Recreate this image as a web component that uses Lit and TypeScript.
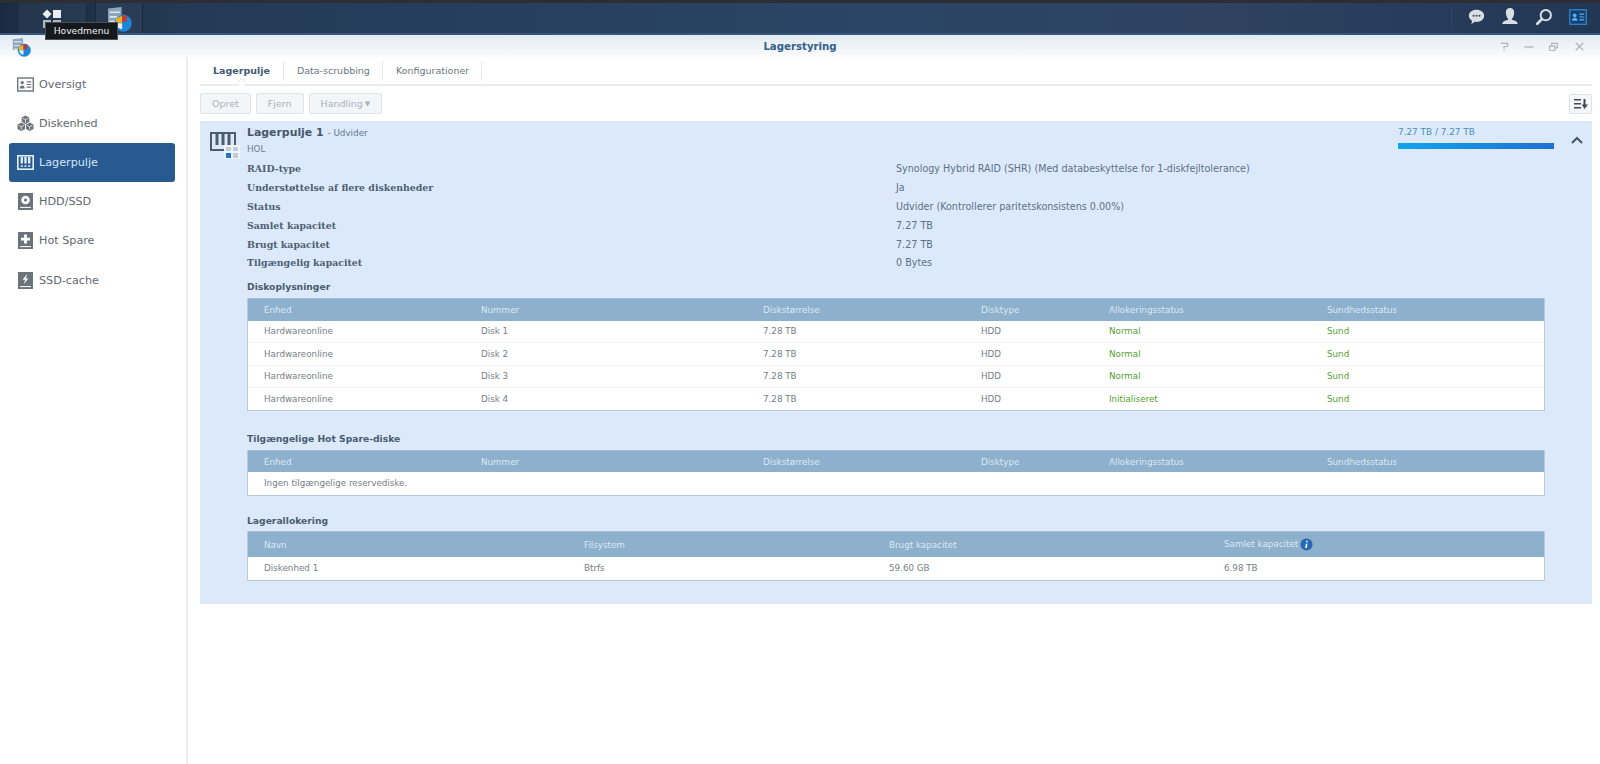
import { LitElement, html, css, svg } from 'lit';
import { customElement, state } from 'lit/decorators.js';

// sidebar icons, all in a 17x17 box
const navIcons: Record<string, unknown> = {
  overview: svg`<rect x="0.7" y="2" width="15.6" height="13" fill="none" stroke="currentColor" stroke-width="1.4"/><circle cx="5.2" cy="6.600" r="1.700" fill="currentColor"/><path d="M2.600 12.400c.2-2 1.100-2.900 2.600-2.900s2.400.9 2.600 2.900z" fill="currentColor"/><path d="M9.600 5.800h4.600M9.600 8.500h4.600M9.600 11.200h4.600" stroke="currentColor" stroke-width="1.200"/>`,
  volume: svg`<path d="M8.500 .5l3.800 2.100v4.200L8.500 8.900 4.700 6.800V2.600zM4.300 7.500l3.700 2.100v4.300l-3.700 2.200L.5 13.900V9.600zM12.700 7.500l3.800 2.100v4.300l-3.800 2.200L9 13.900V9.600z" fill="currentColor"/><path d="M8.500 4.700v3M5.500 3.200l3 1.500 3-1.500M4.300 11.700v3M1.500 10.200l2.800 1.500 2.800-1.500M12.700 11.700v3M9.900 10.200l2.800 1.500 2.800-1.500" fill="none" stroke="#fff" stroke-width=".7"/>`,
  pool: svg`<rect x="0.800" y="1.800" width="15.400" height="13.400" fill="none" stroke="currentColor" stroke-width="1.600"/><path d="M4.800 3v6.600M8.500 3v6.600M12.200 3v6.600" stroke="currentColor" stroke-width="2.400"/><path d="M4.800 11.200v1.600M8.500 11.200v1.600M12.200 11.200v1.600" stroke="currentColor" stroke-width="2.200"/>`,
  hdd: svg`<path d="M1 0h15v17H1z" fill="currentColor"/><circle cx="8.500" cy="7" r="4.300" fill="#fff"/><circle cx="8.500" cy="7" r="1.600" fill="currentColor"/><path d="M3 14.400h11" stroke="#fff" stroke-width="1"/>`,
  spare: svg`<path d="M1 0h15v17H1z" fill="currentColor"/><path d="M8.500 2.600v9M4 7.100h9" stroke="#fff" stroke-width="2.800"/><path d="M3 14.600h11" stroke="#fff" stroke-width="1"/>`,
  cache: svg`<path d="M1 0h15v17H1z" fill="currentColor"/><path d="M10.400 1.800L5.600 7.800h2.600L6.800 12l4.600-5.400H8.800z" fill="#fff"/><path d="M3 14.600h11" stroke="#fff" stroke-width="1"/>`,
};

const storageLogo = (size: number) => html`<svg width=${size} height=${size} viewBox="0 0 24 24">
  <path d="M1 1.500l13-1.500v15H1z" fill="#8fa6bd"/>
  <path d="M2.500 5h10M2.500 9.500h10M2.500 14h6" stroke="#dde6ee" stroke-width="1.500"/>
  <circle cx="15.500" cy="15.500" r="8.200" fill="#1c86d8"/>
  <path d="M8.500 11l6-2.500v6.500h-6z" fill="#f0b020"/>
  <path d="M14.500 8h4.500v6h-4.500z" fill="#c9342c"/>
  <path d="M9 15.500h5.500V21c-3 0-5.500-2-5.500-5.500z" fill="#ececec"/>
</svg>`;

@customElement('app-root')
export class AppRoot extends LitElement {
  @state() private selected = 'Lagerpulje';

  static styles = css`
    :host {
      display: block;
      width: 1600px;
      height: 764px;
      overflow: hidden;
      background: #fff;
      font-family: 'DejaVu Sans', Verdana, sans-serif;
      font-size: 9.5px;
      color: #5f6a74;
      position: relative;
    }

    .taskbar {
      height: 35px;
      box-sizing: border-box;
      display: flex;
      align-items: stretch;
      padding-left: 17px;
      background: linear-gradient(90deg, #1b2c42 0%, #243a56 12%, #2a4566 55%, #2f4361 75%, #213754 100%);
      border-top: 3px solid #2d2e34;
      border-bottom: 2px solid #38557f;
    }
    .task {
      width: 70px;
      display: flex;
      justify-content: center;
      background: rgba(255, 255, 255, 0.04);
      border-left: 1px solid #18273b;
      border-right: 1px solid #18273b;
      margin-right: 8px;
      box-sizing: border-box;
    }
    .task svg { margin-top: 6px; }
    .task + .task { width: 48px; justify-content: flex-start; }
    .task + .task svg { margin: 4px 0 0 11px; overflow: visible; }
    .tray {
      margin-left: auto;
      display: flex;
      align-items: center;
      gap: 16px;
      padding: 0 13px 3px 0;
    }
    .tray .rule { width: 1px; height: 22px; background: #2f4a68; }
    .tray svg { display: block; color: #d9dee3; }

    .tooltip {
      position: absolute;
      left: 45px;
      top: 22px;
      height: 18px;
      box-sizing: border-box;
      width: 73px;
      text-align: center;
      line-height: 16px;
      background: #15181c;
      border: 1px solid #4a4f55;
      color: #eef0f2;
      font-size: 9.2px;
      white-space: nowrap;
    }

    .titlebar {
      height: 22px;
      display: grid;
      grid-template-columns: 1fr auto 1fr;
      align-items: center;
      padding: 0 16px;
      background: linear-gradient(#e2ebf3, #fafbfd);
    }
    .titlebar > svg { margin: 3px 0 0 -4px; }
    .titlebar h1 {
      margin: 0;
      text-align: center;
      font-size: 10.2px;
      font-weight: bold;
      color: #34608a;
    }
    .winctl { display: flex; gap: 15px; color: #b0b6bd; justify-content: flex-end; }
    .winctl svg { display: block; }
    .winctl svg:last-child { margin-left: 2px; }

    .body {
      display: flex;
      height: 707px;
    }
    .sidebar {
      width: 188px;
      flex: none;
      border-right: 2px solid #eceef0;
      padding-top: 7.6px;
      box-sizing: border-box;
    }
    .nav {
      height: 39.2px;
      margin: 0 11px 0 9px;
      display: flex;
      align-items: center;
      gap: 5px;
      padding-left: 8px;
      font-size: 11.2px;
      color: #5f6870;
      border-radius: 3px;
      cursor: pointer;
    }
    .nav svg { flex: none; color: #6c747b; }
    .nav.on { background: #265a90; color: #d5e6f8; }
    .nav.on svg { color: #e4eef8; }

    .main {
      flex: 1;
      min-width: 0;
      padding: 0 8px 0 12px;
      box-sizing: border-box;
    }
    .tabs {
      display: flex;
      align-items: center;
      border-bottom: 2px solid #e9ebee;
      box-sizing: border-box;
      height: 29px;
    }
    .tab {
      padding: 0 13px;
      height: 20px;
      line-height: 20px;
      border-right: 1px solid #e5e8ec;
      color: #6c7781;
      position: relative;
    }
    .tab + .tab { padding-right: 12px; }
    .tab.on { font-weight: bold; color: #3e5a75; }
    .tab.on::after {
      content: '';
      position: absolute;
      left: 50%;
      bottom: -5px;
      width: 6px;
      height: 6px;
      margin-left: -3px;
      background: #fff;
      border-top: 1px solid #e9ebee;
      border-left: 1px solid #e9ebee;
      transform: rotate(45deg);
    }
    .toolbar {
      display: flex;
      align-items: center;
      gap: 5px;
      height: 35px;
    }
    .btn {
      height: 21px;
      line-height: 20px;
      padding: 0 11px;
      box-sizing: border-box;
      border: 1px solid #dfe4ea;
      border-radius: 2px;
      background: #f3f6f9;
      color: #a9b1ba;
    }
    .caret { font-size: 7px; vertical-align: 1px; margin-left: 2px; }
    .sort {
      margin-left: auto;
      width: 23px;
      height: 20px;
      padding: 0;
      display: flex;
      align-items: center;
      justify-content: center;
      background: #f6f7f9;
      color: #3e4a55;
    }

    .panel {
      height: 483px;
      box-sizing: border-box;
      background: #dce9fa;
      padding: 5px 47px 0 47px;
      position: relative;
    }
    .pool-icon {
      position: absolute;
      left: 10px;
      top: 9px;
    }
    .head-name { font-size: 10.9px; font-weight: bold; color: #46586b; line-height: 14px; }
    .head-state { font-size: 8.8px; font-weight: normal; color: #5d7a94; }
    .hol { font-size: 8.8px; color: #6d7f90; margin-top: 4px; line-height: 11px; }
    .usage {
      position: absolute;
      right: 38px;
      top: 6px;
      width: 156px;
      color: #4b8fc0;
      font-size: 8.9px;
      line-height: 11px;
    }
    .bar {
      height: 6px;
      margin-top: 5px;
      background: linear-gradient(90deg, #12a3ee, #2071cf);
    }
    .chevron { position: absolute; right: 9px; top: 15px; color: #41566b; }

    .facts {
      display: grid;
      grid-template-columns: 649px 1fr;
      grid-auto-rows: 18.8px;
      align-items: center;
      margin-top: 4.6px;
      color: #5c7186;
      font-size: 9.6px;
    }
    .facts b { color: #4d5f72; font-family: 'DejaVu Serif', Georgia, serif; font-size: 9.4px; }

    h3 {
      margin: 9px 0 5px;
      font-size: 9.2px;
      font-weight: bold;
      color: #495c70;
      line-height: 12px;
    }
    h3.second { margin-top: 21.5px; }
    h3.third { margin: 19.5px 0 4px; }
    .table {
      background: #fff;
      border: 1px solid #b9c9d9;
      border-top: none;
      width: 1298px;
      box-sizing: border-box;
      font-size: 8.75px;
    }
    .row {
      display: grid;
      grid-template-columns: var(--cols);
      padding-left: 16px;
      height: 22.4px;
      box-sizing: border-box;
      align-items: center;
      border-bottom: 1px solid #f3f5f7;
      color: #767e85;
    }
    .row:last-child { border-bottom: none; }
    .row.hd {
      background: #8db0cd;
      color: #dde8f1;
      border-top: 1px solid #a3bdd4;
      border-bottom: none;
    }
    .row.tall { height: 26px; }
    .ok { color: #55a032; }
    .info { display: inline-flex; vertical-align: middle; margin-left: 2px; }
  `;

  private nav = [
    ['Oversigt', 'overview'],
    ['Diskenhed', 'volume'],
    ['Lagerpulje', 'pool'],
    ['HDD/SSD', 'hdd'],
    ['Hot Spare', 'spare'],
    ['SSD-cache', 'cache'],
  ];

  private facts = [
    ['RAID-type', 'Synology Hybrid RAID (SHR) (Med databeskyttelse for 1-diskfejltolerance)'],
    ['Understøttelse af flere diskenheder', 'Ja'],
    ['Status', 'Udvider (Kontrollerer paritetskonsistens 0.00%)'],
    ['Samlet kapacitet', '7.27 TB'],
    ['Brugt kapacitet', '7.27 TB'],
    ['Tilgængelig kapacitet', '0 Bytes'],
  ];

  private diskCols = ['Enhed', 'Nummer', 'Diskstørrelse', 'Disktype', 'Allokeringsstatus', 'Sundhedsstatus'];

  private disks = [
    ['Disk 1', 'Normal'],
    ['Disk 2', 'Normal'],
    ['Disk 3', 'Normal'],
    ['Disk 4', 'Initialiseret'],
  ];

  private renderTaskbar() {
    return html`
      <div class="taskbar">
        <div class="task">
          <svg width="20" height="20" viewBox="0 0 20 20" fill="#e9edf1">
            <path d="M5 .5L9.500 5 5 9.500.5 5z"/>
            <rect x="11" y="1" width="8" height="8"/>
            <rect x="1" y="11" width="8" height="8" opacity=".7"/>
            <rect x="11" y="11" width="8" height="8" opacity=".7"/>
          </svg>
        </div>
        <div class="task">${storageLogo(25)}</div>
        <div class="tray">
          <div class="rule"></div>
          <svg width="17" height="17" viewBox="0 0 20 20" fill="currentColor"><path d="M10 2c5 0 9 3 9 7.200s-4 7.200-9 7.200c-.8 0-1.500-.1-2.200-.2L4 19l.7-4C2.500 13.700 1 11.600 1 9.200 1 5 5 2 10 2z"/><circle cx="6.500" cy="9.200" r="1.200" fill="#33475f"/><circle cx="10" cy="9.200" r="1.200" fill="#33475f"/><circle cx="13.500" cy="9.200" r="1.200" fill="#33475f"/></svg>
          <svg width="18" height="19" viewBox="0 0 18 20" fill="currentColor"><path d="M9 1c2.800 0 4.400 2 4.400 5s-1.400 5.500-2.400 6.300v1.200c2.500.7 6 1.500 6 4.500H1c0-3 3.500-3.800 6-4.500v-1.200C6 11.500 4.600 9 4.600 6S6.200 1 9 1z"/></svg>
          <svg width="18" height="18" viewBox="0 0 19 20" fill="none" stroke="currentColor"><circle cx="11.500" cy="8" r="5.700" stroke-width="2.200"/><path d="M7 12.500L2 17.500" stroke-width="3" stroke-linecap="round"/></svg>
          <svg width="18" height="16" viewBox="0 0 19 17"><rect width="19" height="17" fill="#2f7fc4"/><rect x="1.500" y="1.500" width="16" height="14" fill="#12406f"/><circle cx="6" cy="6.800" r="2" fill="#59b2ee"/><path d="M3 12.500c.2-2.200 1.200-3.200 3-3.200s2.800 1 3 3.200z" fill="#59b2ee"/><path d="M11 5.500h5M11 8.500h5M11 11.500h5" stroke="#59b2ee" stroke-width="1.300"/></svg>
        </div>
      </div>
      <div class="tooltip">Hovedmenu</div>
    `;
  }

  private renderTitlebar() {
    return html`
      <div class="titlebar">
        ${storageLogo(19)}
        <h1>Lagerstyring</h1>
        <div class="winctl">
          <svg width="9" height="9" viewBox="0 0 10 10" fill="none" stroke="currentColor" stroke-width="1.300"><path d="M1 1.500h7.500v3.500H4.500v2.500M4.500 8.500v1.500"/></svg>
          <svg width="10" height="9" viewBox="0 0 10 10" stroke="currentColor" stroke-width="1.500"><path d="M0 5.500h10"/></svg>
          <svg width="9" height="9" viewBox="0 0 10 10" fill="none" stroke="currentColor" stroke-width="1.300"><path d="M.6 4.500h6v5h-6zM3 4V1.500h6.400v5H7"/></svg>
          <svg width="9" height="9" viewBox="0 0 10 10" stroke="currentColor" stroke-width="1.400"><path d="M.8.800l8.400 8.400M9.200.800L.8 9.200"/></svg>
        </div>
      </div>
    `;
  }

  private renderSidebar() {
    return html`
      <div class="sidebar">
        ${this.nav.map(
          ([label, icon]) => html`
            <div
              class="nav ${this.selected === label ? 'on' : ''}"
              @click=${() => (this.selected = label)}
            >
              <svg width="17" height="17" viewBox="0 0 17 17">${navIcons[icon]}</svg>
              ${label}
            </div>
          `,
        )}
      </div>
    `;
  }

  private renderTable(cols: string, head: unknown[], rows: unknown[][], tall = false) {
    return html`
      <div class="table" style="--cols:${cols}">
        <div class="row hd ${tall ? 'tall' : ''}">${head.map((c) => html`<span>${c}</span>`)}</div>
        ${rows.map((r) => html`<div class="row">${r.map((c) => html`<span>${c}</span>`)}</div>`)}
      </div>
    `;
  }

  render() {
    const diskGrid = '217px 282px 218px 128px 218px 1fr';
    const diskRows = this.disks.map(([nr, alloc]) => [
      'Hardwareonline',
      nr,
      '7.28 TB',
      'HDD',
      html`<span class="ok">${alloc}</span>`,
      html`<span class="ok">Sund</span>`,
    ]);
    const info = html`<span class="info"><svg width="13" height="13" viewBox="0 0 14 14"><circle cx="7" cy="7" r="6.500" fill="#2369b5"/><path d="M7.500 3v1.600M7.200 6l-.8 5" stroke="#fff" stroke-width="1.700"/></svg></span>`;

    return html`
      ${this.renderTaskbar()} ${this.renderTitlebar()}
      <div class="body">
        ${this.renderSidebar()}
        <div class="main">
          <div class="tabs">
            <div class="tab on">Lagerpulje</div>
            <div class="tab">Data-scrubbing</div>
            <div class="tab">Konfigurationer</div>
          </div>
          <div class="toolbar">
            <div class="btn">Opret</div>
            <div class="btn">Fjern</div>
            <div class="btn">Handling<span class="caret">▼</span></div>
            <div class="btn sort">
              <svg width="14" height="12" viewBox="0 0 14 12" fill="currentColor"><path d="M0 1h7v1.600H0zM0 5h7v1.600H0zM0 9h7v1.600H0zM9.500 1h2v5.500H14L10.500 11 7.800 6.500h1.700z"/></svg>
            </div>
          </div>
          <div class="panel">
            <svg class="pool-icon" width="30" height="30" viewBox="0 0 30 30">
              <path d="M1 3h24v17H1z" fill="none" stroke="#4c5d6e" stroke-width="2"/>
              <path d="M7 4v11M13 4v11M19 4v11" stroke="#4c5d6e" stroke-width="3"/>
              <path d="M14 15h16v14H14z" fill="#eef4fb"/>
              <rect x="16" y="17" width="5" height="4" fill="#c4ccd4"/>
              <rect x="23" y="17" width="5" height="4" fill="#c4ccd4"/>
              <rect x="16" y="23" width="5" height="5" fill="#1f76c8"/>
              <rect x="23" y="23" width="5" height="5" fill="#c4ccd4"/>
            </svg>
            <div class="head-name">Lagerpulje 1 <span class="head-state">- Udvider</span></div>
            <div class="hol">HOL</div>
            <div class="usage">7.27 TB / 7.27 TB<div class="bar"></div></div>
            <svg class="chevron" width="12" height="8" viewBox="0 0 12 8" fill="none" stroke="currentColor" stroke-width="2"><path d="M1 7l5-5 5 5"/></svg>

            <div class="facts">
              ${this.facts.map(([k, v]) => html`<b>${k}</b><span>${v}</span>`)}
            </div>

            <h3>Diskoplysninger</h3>
            ${this.renderTable(diskGrid, this.diskCols, diskRows)}

            <h3 class="second">Tilgængelige Hot Spare-diske</h3>
            ${this.renderTable(diskGrid, this.diskCols, [['Ingen tilgængelige reservediske.']])}

            <h3 class="third">Lagerallokering</h3>
            ${this.renderTable(
              '320px 305px 335px 1fr',
              ['Navn', 'Filsystem', 'Brugt kapacitet', html`Samlet kapacitet${info}`],
              [['Diskenhed 1', 'Btrfs', '59.60 GB', '6.98 TB']],
              true,
            )}
          </div>
        </div>
      </div>
    `;
  }
}
